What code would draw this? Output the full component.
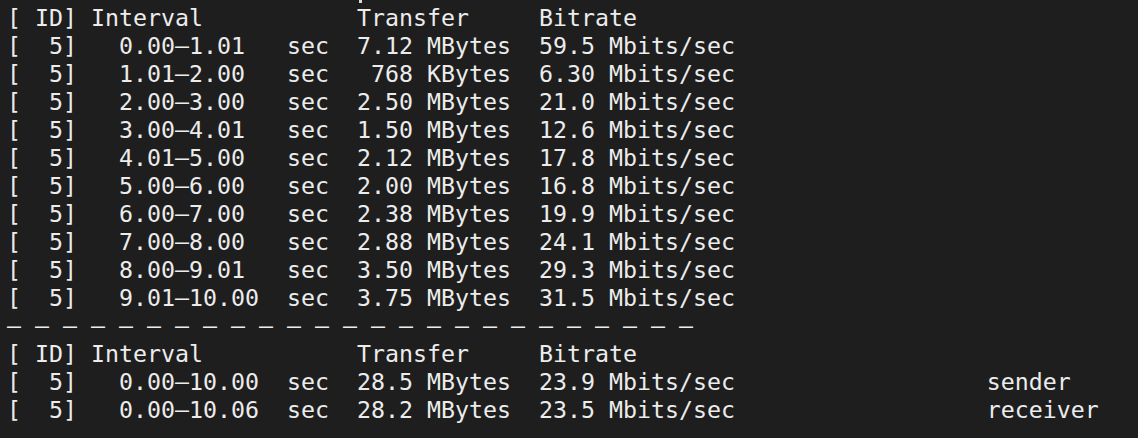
import React from "react";

const lines: string[] = [
  "[ ID] Interval           Transfer     Bitrate",
  "[  5]   0.00–1.01   sec  7.12 MBytes  59.5 Mbits/sec",
  "[  5]   1.01–2.00   sec   768 KBytes  6.30 Mbits/sec",
  "[  5]   2.00–3.00   sec  2.50 MBytes  21.0 Mbits/sec",
  "[  5]   3.00–4.01   sec  1.50 MBytes  12.6 Mbits/sec",
  "[  5]   4.01–5.00   sec  2.12 MBytes  17.8 Mbits/sec",
  "[  5]   5.00–6.00   sec  2.00 MBytes  16.8 Mbits/sec",
  "[  5]   6.00–7.00   sec  2.38 MBytes  19.9 Mbits/sec",
  "[  5]   7.00–8.00   sec  2.88 MBytes  24.1 Mbits/sec",
  "[  5]   8.00–9.01   sec  3.50 MBytes  29.3 Mbits/sec",
  "[  5]   9.01–10.00  sec  3.75 MBytes  31.5 Mbits/sec",
  "– – – – – – – – – – – – – – – – – – – – – – – – –",
  "[ ID] Interval           Transfer     Bitrate",
  "[  5]   0.00–10.00  sec  28.5 MBytes  23.9 Mbits/sec                  sender",
  "[  5]   0.00–10.06  sec  28.2 MBytes  23.5 Mbits/sec                  receiver",
];

export default function App() {
  return (
    <div className="w-[1138px] h-[438px] bg-[#1e1e1e] overflow-hidden text-[#ececec]">
      <div className="h-[4px] pl-[359px]">
        <div className="w-[3px] h-[3px] bg-[#d8d8d8]" />
      </div>
      <div
        className="pl-[7px] whitespace-pre text-[23.25px] leading-[28px]"
        style={{ fontFamily: '"DejaVu Sans Mono", "Liberation Mono", monospace' }}
      >
        {lines.map((l, i) => (
          <div key={i}>{l}</div>
        ))}
      </div>
    </div>
  );
}
